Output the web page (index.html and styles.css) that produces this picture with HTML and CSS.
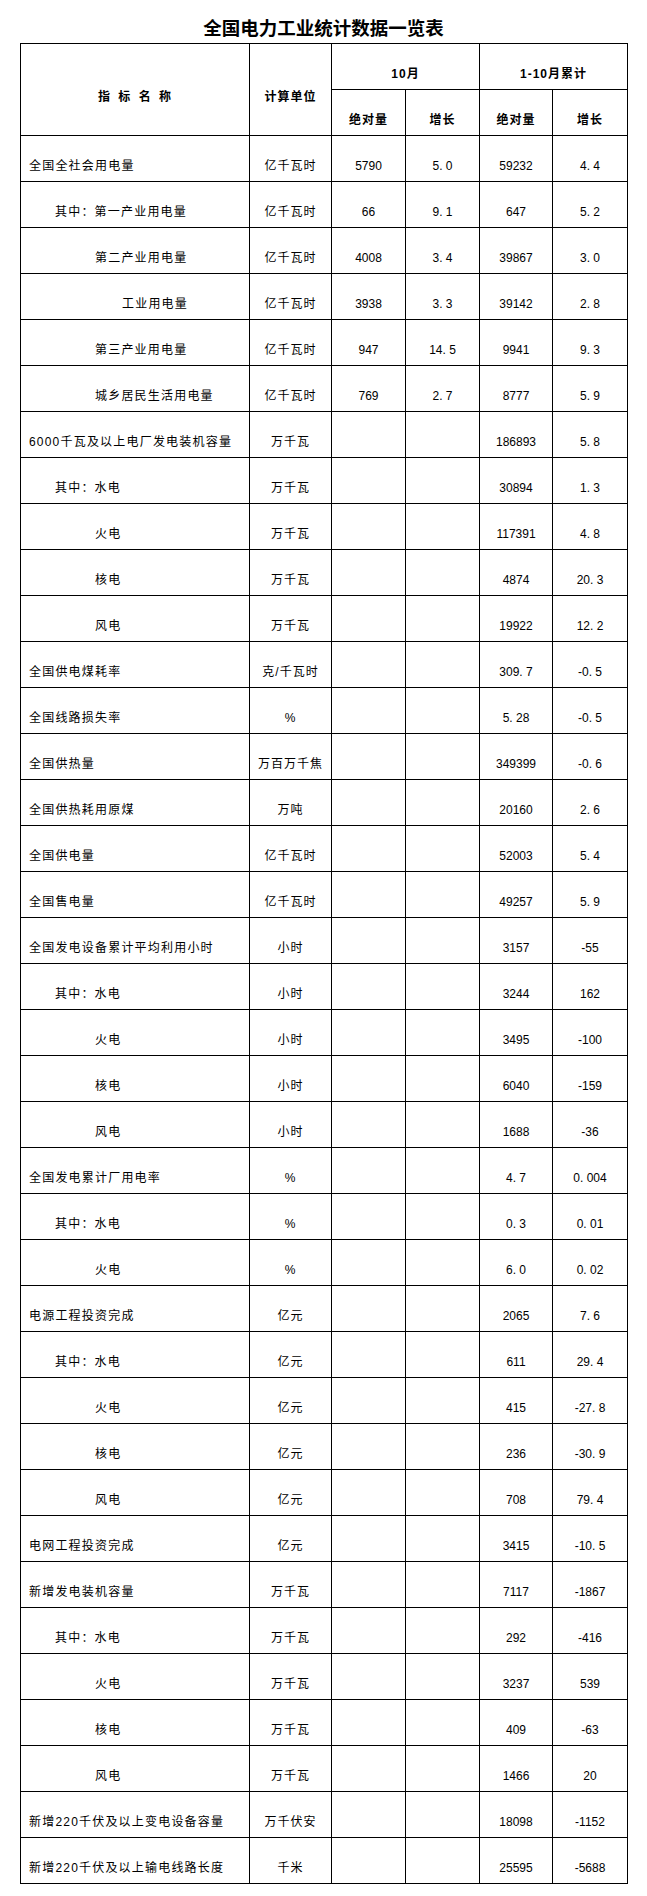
FILE: index.html
```html
<!DOCTYPE html>
<html lang="zh-CN">
<head>
<meta charset="utf-8">
<title>全国电力工业统计数据一览表</title>
<link rel="stylesheet" href="styles.css">
</head>
<body>
<div class="page">
  <h1 class="title">全国电力工业统计数据一览表</h1>
  <table class="stats">
    <colgroup>
      <col class="c-name"><col class="c-unit"><col class="c-v1"><col class="c-v2"><col class="c-v3"><col class="c-v4">
    </colgroup>
    <thead>
      <tr>
        <th rowspan="2" class="spaced">指 标 名 称</th>
        <th rowspan="2">计算单位</th>
        <th colspan="2">10月</th>
        <th colspan="2">1-10月累计</th>
      </tr>
      <tr>
        <th>绝对量</th><th>增长</th><th>绝对量</th><th>增长</th>
      </tr>
    </thead>
    <tbody>
      <tr><td class="name">全国全社会用电量</td><td class="unit">亿千瓦时</td><td class="num">5790</td><td class="num">5. 0</td><td class="num">59232</td><td class="num">4. 4</td></tr>
      <tr><td class="name ind1">其中：第一产业用电量</td><td class="unit">亿千瓦时</td><td class="num">66</td><td class="num">9. 1</td><td class="num">647</td><td class="num">5. 2</td></tr>
      <tr><td class="name ind2">第二产业用电量</td><td class="unit">亿千瓦时</td><td class="num">4008</td><td class="num">3. 4</td><td class="num">39867</td><td class="num">3. 0</td></tr>
      <tr><td class="name ind3">工业用电量</td><td class="unit">亿千瓦时</td><td class="num">3938</td><td class="num">3. 3</td><td class="num">39142</td><td class="num">2. 8</td></tr>
      <tr><td class="name ind2">第三产业用电量</td><td class="unit">亿千瓦时</td><td class="num">947</td><td class="num">14. 5</td><td class="num">9941</td><td class="num">9. 3</td></tr>
      <tr><td class="name ind2">城乡居民生活用电量</td><td class="unit">亿千瓦时</td><td class="num">769</td><td class="num">2. 7</td><td class="num">8777</td><td class="num">5. 9</td></tr>
      <tr><td class="name">6000千瓦及以上电厂发电装机容量</td><td class="unit">万千瓦</td><td></td><td></td><td class="num">186893</td><td class="num">5. 8</td></tr>
      <tr><td class="name ind1">其中：水电</td><td class="unit">万千瓦</td><td></td><td></td><td class="num">30894</td><td class="num">1. 3</td></tr>
      <tr><td class="name ind2">火电</td><td class="unit">万千瓦</td><td></td><td></td><td class="num">117391</td><td class="num">4. 8</td></tr>
      <tr><td class="name ind2">核电</td><td class="unit">万千瓦</td><td></td><td></td><td class="num">4874</td><td class="num">20. 3</td></tr>
      <tr><td class="name ind2">风电</td><td class="unit">万千瓦</td><td></td><td></td><td class="num">19922</td><td class="num">12. 2</td></tr>
      <tr><td class="name">全国供电煤耗率</td><td class="unit">克/千瓦时</td><td></td><td></td><td class="num">309. 7</td><td class="num">-0. 5</td></tr>
      <tr><td class="name">全国线路损失率</td><td class="unit">%</td><td></td><td></td><td class="num">5. 28</td><td class="num">-0. 5</td></tr>
      <tr><td class="name">全国供热量</td><td class="unit">万百万千焦</td><td></td><td></td><td class="num">349399</td><td class="num">-0. 6</td></tr>
      <tr><td class="name">全国供热耗用原煤</td><td class="unit">万吨</td><td></td><td></td><td class="num">20160</td><td class="num">2. 6</td></tr>
      <tr><td class="name">全国供电量</td><td class="unit">亿千瓦时</td><td></td><td></td><td class="num">52003</td><td class="num">5. 4</td></tr>
      <tr><td class="name">全国售电量</td><td class="unit">亿千瓦时</td><td></td><td></td><td class="num">49257</td><td class="num">5. 9</td></tr>
      <tr><td class="name">全国发电设备累计平均利用小时</td><td class="unit">小时</td><td></td><td></td><td class="num">3157</td><td class="num">-55</td></tr>
      <tr><td class="name ind1">其中：水电</td><td class="unit">小时</td><td></td><td></td><td class="num">3244</td><td class="num">162</td></tr>
      <tr><td class="name ind2">火电</td><td class="unit">小时</td><td></td><td></td><td class="num">3495</td><td class="num">-100</td></tr>
      <tr><td class="name ind2">核电</td><td class="unit">小时</td><td></td><td></td><td class="num">6040</td><td class="num">-159</td></tr>
      <tr><td class="name ind2">风电</td><td class="unit">小时</td><td></td><td></td><td class="num">1688</td><td class="num">-36</td></tr>
      <tr><td class="name">全国发电累计厂用电率</td><td class="unit">%</td><td></td><td></td><td class="num">4. 7</td><td class="num">0. 004</td></tr>
      <tr><td class="name ind1">其中：水电</td><td class="unit">%</td><td></td><td></td><td class="num">0. 3</td><td class="num">0. 01</td></tr>
      <tr><td class="name ind2">火电</td><td class="unit">%</td><td></td><td></td><td class="num">6. 0</td><td class="num">0. 02</td></tr>
      <tr><td class="name">电源工程投资完成</td><td class="unit">亿元</td><td></td><td></td><td class="num">2065</td><td class="num">7. 6</td></tr>
      <tr><td class="name ind1">其中：水电</td><td class="unit">亿元</td><td></td><td></td><td class="num">611</td><td class="num">29. 4</td></tr>
      <tr><td class="name ind2">火电</td><td class="unit">亿元</td><td></td><td></td><td class="num">415</td><td class="num">-27. 8</td></tr>
      <tr><td class="name ind2">核电</td><td class="unit">亿元</td><td></td><td></td><td class="num">236</td><td class="num">-30. 9</td></tr>
      <tr><td class="name ind2">风电</td><td class="unit">亿元</td><td></td><td></td><td class="num">708</td><td class="num">79. 4</td></tr>
      <tr><td class="name">电网工程投资完成</td><td class="unit">亿元</td><td></td><td></td><td class="num">3415</td><td class="num">-10. 5</td></tr>
      <tr><td class="name">新增发电装机容量</td><td class="unit">万千瓦</td><td></td><td></td><td class="num">7117</td><td class="num">-1867</td></tr>
      <tr><td class="name ind1">其中：水电</td><td class="unit">万千瓦</td><td></td><td></td><td class="num">292</td><td class="num">-416</td></tr>
      <tr><td class="name ind2">火电</td><td class="unit">万千瓦</td><td></td><td></td><td class="num">3237</td><td class="num">539</td></tr>
      <tr><td class="name ind2">核电</td><td class="unit">万千瓦</td><td></td><td></td><td class="num">409</td><td class="num">-63</td></tr>
      <tr><td class="name ind2">风电</td><td class="unit">万千瓦</td><td></td><td></td><td class="num">1466</td><td class="num">20</td></tr>
      <tr><td class="name">新增220千伏及以上变电设备容量</td><td class="unit">万千伏安</td><td></td><td></td><td class="num">18098</td><td class="num">-1152</td></tr>
      <tr><td class="name">新增220千伏及以上输电线路长度</td><td class="unit">千米</td><td></td><td></td><td class="num">25595</td><td class="num">-5688</td></tr>
    </tbody>
  </table>
</div>
</body>
</html>
```

FILE: styles.css
```css
html, body {
  margin: 0;
  padding: 0;
  background: #fff;
}

body {
  font-family: "Liberation Sans", "Noto Sans CJK SC", sans-serif;
  color: #000;
}

.page {
  width: 607px;
  margin-left: 20px;
}

.title {
  margin: 0 0 4px;
  padding-top: 15px;
  font-size: 18.5px;
  line-height: 24px;
  font-weight: bold;
  text-align: center;
  font-family: "Noto Sans CJK SC", sans-serif;
}

.stats {
  width: 607px;
  border-collapse: collapse;
  table-layout: fixed;
}

.c-name { width: 229px; }
.c-unit { width: 82px; }
.c-v1 { width: 74px; }
.c-v2 { width: 74px; }
.c-v3 { width: 73px; }
.c-v4 { width: 75px; }

.stats th,
.stats td {
  border: 1px solid #000;
  padding: 15px 0 0;
  height: 30px;
  line-height: 16px;
  font-size: 12px;
  vertical-align: middle;
  text-align: center;
  white-space: nowrap;
}

.stats th {
  font-weight: bold;
  letter-spacing: 1px;
}

.stats th.spaced {
  word-spacing: 3px;
}

.stats td.name {
  text-align: left;
  padding-left: 8px;
  letter-spacing: 1.2px;
}

.stats td.ind1 { padding-left: 34px; }
.stats td.ind2 { padding-left: 74px; }
.stats td.ind3 { padding-left: 101px; }

.stats td.unit {
  letter-spacing: 1px;
}

.stats td.num {
  letter-spacing: 0;
}
```
